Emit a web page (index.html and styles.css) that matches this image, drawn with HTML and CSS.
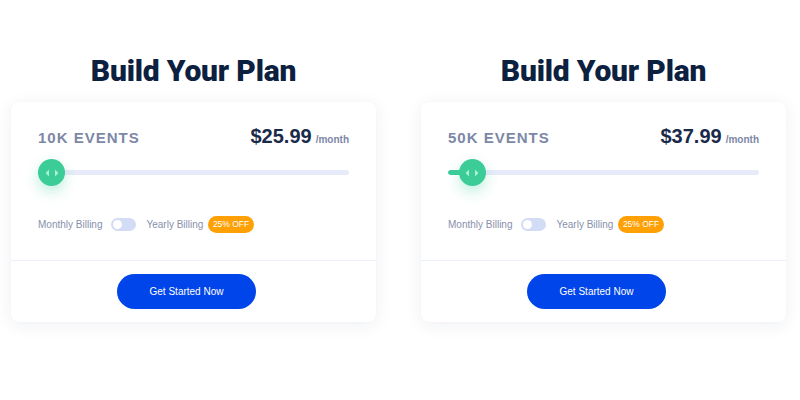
FILE: index.html
```html
<!DOCTYPE html>
<html>
<head>
<meta charset="utf-8">
<link rel="stylesheet" href="styles.css">
</head>
<body>
<div class="page">
  <section class="panel">
    <h1 class="title">Build Your Plan</h1>
    <div class="card">
      <div class="card-body">
        <div class="head">
          <span class="events">10K EVENTS</span>
          <span class="price"><span class="amount">$25.99</span><span class="per">/month</span></span>
        </div>
        <div class="slider">
          <div class="track"><div class="fill" style="width:0px"></div></div>
          <div class="thumb" style="left:0px">
            <svg width="14" height="8" viewBox="0 0 14 8"><polygon points="4,0.5 4,7.5 0.5,4" fill="#a9eed6"/><polygon points="10,0.5 10,7.5 13.5,4" fill="#a9eed6"/></svg>
          </div>
        </div>
        <div class="billing">
          <span class="label">Monthly Billing</span>
          <span class="toggle"><span class="knob"></span></span>
          <span class="label">Yearly Billing</span>
          <span class="badge">25% OFF</span>
        </div>
      </div>
      <div class="card-foot">
        <button class="cta">Get Started Now</button>
      </div>
    </div>
  </section>
  <section class="panel">
    <h1 class="title">Build Your Plan</h1>
    <div class="card">
      <div class="card-body">
        <div class="head">
          <span class="events">50K EVENTS</span>
          <span class="price"><span class="amount">$37.99</span><span class="per">/month</span></span>
        </div>
        <div class="slider">
          <div class="track"><div class="fill" style="width:24px"></div></div>
          <div class="thumb" style="left:10.5px">
            <svg width="14" height="8" viewBox="0 0 14 8"><polygon points="4,0.5 4,7.5 0.5,4" fill="#a9eed6"/><polygon points="10,0.5 10,7.5 13.5,4" fill="#a9eed6"/></svg>
          </div>
        </div>
        <div class="billing">
          <span class="label">Monthly Billing</span>
          <span class="toggle"><span class="knob"></span></span>
          <span class="label">Yearly Billing</span>
          <span class="badge">25% OFF</span>
        </div>
      </div>
      <div class="card-foot">
        <button class="cta">Get Started Now</button>
      </div>
    </div>
  </section>
</div>
</body>
</html>
```
FILE: styles.css
```css
* { box-sizing: border-box; }
html, body { margin: 0; padding: 0; background: #ffffff; }
body { font-family: "Liberation Sans", Arial, sans-serif; width: 800px; height: 400px; overflow: hidden; }

.page {
  display: flex;
  gap: 45px;
  padding: 53px 0 0 11px;
}
.panel { width: 365px; }

.title {
  margin: 0 0 13px;
  font-family: Roboto, "Liberation Sans", sans-serif;
  font-weight: 900;
  font-size: 30px;
  line-height: 36px;
  color: #0c2040;
  text-align: center;
  letter-spacing: -0.2px;
}

.card {
  background: #fff;
  border-radius: 8px;
  box-shadow: 0 3px 18px rgba(30, 45, 90, 0.07), 0 0 2px rgba(30, 45, 90, 0.04);
}
.card-body {
  padding: 24px 27px 27px;
  border-bottom: 1px solid #eef0f7;
}
.head {
  display: flex;
  justify-content: space-between;
  align-items: baseline;
  height: 20px;
  line-height: 20px;
}
.events {
  font-size: 15px;
  font-weight: 700;
  letter-spacing: 1px;
  color: #7d87a6;
}
.price { display: flex; align-items: baseline; gap: 4px; }
.amount { font-size: 20px; font-weight: 700; color: #1a2a4a; }
.per { font-size: 10px; font-weight: 700; color: #7d87a6; }

.slider {
  position: relative;
  height: 27px;
  margin-top: 13px;
  display: flex;
  align-items: center;
}
.track {
  width: 100%;
  height: 5px;
  border-radius: 3px;
  background: #e7ebf9;
  position: relative;
  overflow: hidden;
}
.fill { height: 100%; background: #3ccc98; border-radius: 3px; }
.thumb {
  position: absolute;
  top: 0;
  width: 27px;
  height: 27px;
  border-radius: 50%;
  background: #3ccc98;
  box-shadow: 0 6px 14px rgba(60, 204, 152, 0.32);
  display: flex;
  align-items: center;
  justify-content: center;
}
.thumb svg { display: block; }

.billing {
  display: flex;
  align-items: center;
  margin-top: 30px;
  height: 17px;
}
.label { font-size: 10px; color: #8790ac; }
.toggle {
  width: 25px;
  height: 13px;
  border-radius: 7px;
  background: #d2dcf4;
  margin: 0 10px 0 9px;
  display: flex;
  align-items: center;
  padding-left: 2px;
}
.knob { width: 9px; height: 9px; border-radius: 50%; background: #fff; }
.badge {
  margin-left: 5px;
  height: 17px;
  padding: 0 4.5px;
  border-radius: 9px;
  background: #ffa005;
  color: #fff;
  font-size: 8.5px;
  line-height: 17px;
}

.card-foot {
  display: flex;
  justify-content: center;
  padding: 13px 14px 13px 0;
}
.cta {
  width: 139px;
  height: 35px;
  border: none;
  border-radius: 18px;
  background: #0045e9;
  color: #fff;
  font-family: "Liberation Sans", Arial, sans-serif;
  font-size: 10px;
  cursor: pointer;
}
```
